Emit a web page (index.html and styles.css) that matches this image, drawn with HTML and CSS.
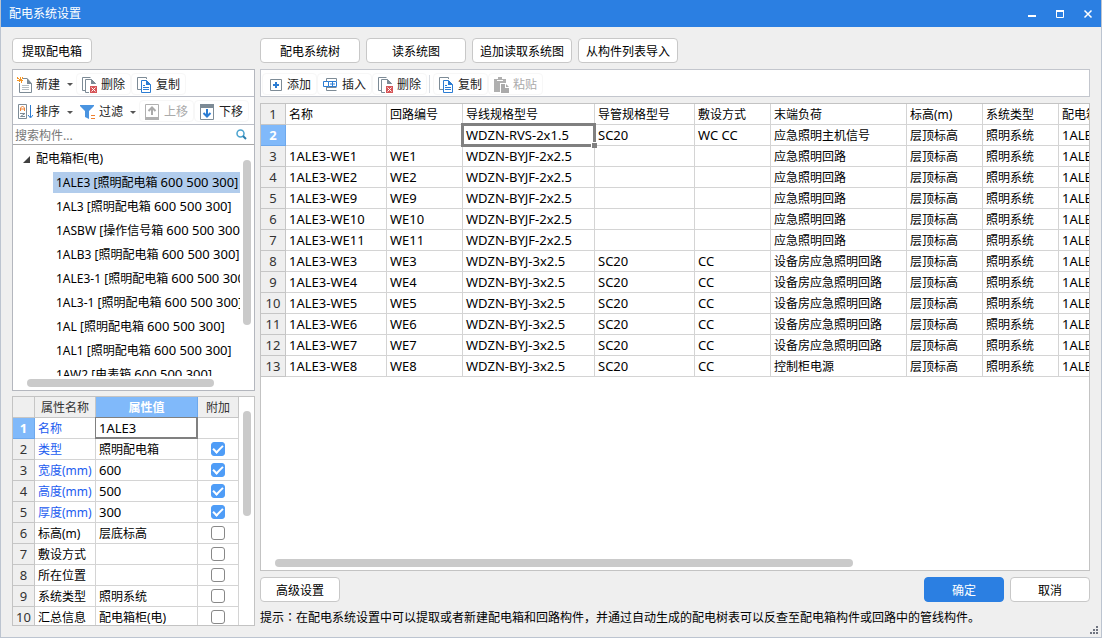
FILE: index.html
```html
<!DOCTYPE html>
<html lang="zh-CN">
<head>
<meta charset="utf-8">
<title>配电系统设置</title>
<link rel="stylesheet" href="styles.css">
</head>
<body>
<svg class="defs" aria-hidden="true">
  <symbol id="i-delete" viewBox="0 0 16 16"><path d="M3 13.500H.5V.5h8" fill="none" stroke="#7d8b96"/><path d="M7 15.500H3.500V2.500h6l4 4V7" fill="none" stroke="#7d8b96"/><path d="M9 2v5h5z" fill="#7d8b96"/><path d="M8 9h7v7H8z" fill="#d65558"/><path d="M9.500 10.500l4 4m0-4l-4 4" stroke="#fff"/></symbol>
  <symbol id="i-copy" viewBox="0 0 16 16"><path d="M4 12.500H.5V.5h9V2" fill="none" stroke="#7d8b96"/><path d="M4.500 3.500h5l4 4v8h-9z" fill="#fff" stroke="#2b7cd3"/><path d="M9 3v5h5z" fill="#2b7cd3"/><path d="M6 8.500h2M6 10.500h6M6 12.500h6" stroke="#2b7cd3"/></symbol>
  <symbol id="i-new" viewBox="0 0 16 16"><path d="M6 1.500h4l4.500 5v9H2.500V6" fill="#fff" stroke="#7d8b96"/><path d="M10 1v6h5z" fill="#7d8b96"/><path d="M5 8.500h7M5 10.500h7M5 12.500h7" stroke="#b5bec4"/><path d="M0 0h1v1h1v1h1V0h1v2h1V0h1v2H5v1h1v1H5v2H4V4H3v1H2V4H0V3h2V2H0z" fill="#f39423"/></symbol>
  <symbol id="i-sort" viewBox="0 0 16 16"><path d="M1.500.500h8v14h-8z" fill="#fff" stroke="#7d8b96"/><path d="M3.500 7V4l2-2 2 2v3m-4-2h4" fill="none" stroke="#ee8131"/><path d="M3 9.500h5L3.500 12.500H8" fill="none" stroke="#7d8b96"/><path d="M13.500 1v12m-2.500-2l2.500 3L16 11" fill="none" stroke="#2b7cd3"/></symbol>
  <symbol id="i-filter" viewBox="0 0 16 16"><path d="M0 1h14v1L9 7v8l-4-2V7L0 2z" fill="#4a94e0"/><path d="M11 11.500h4M11 14.500h4" stroke="#ee8131"/></symbol>
  <symbol id="i-up" viewBox="0 0 16 16"><path d="M.5.500h13v15H.5z" fill="#fff" stroke="#b0b0b0"/><path d="M0 13h14v3H0z" fill="#b0b0b0"/><path d="M7 11V4M3.500 7L7 3.500 10.500 7" fill="none" stroke="#aaa" stroke-width="2"/></symbol>
  <symbol id="i-down" viewBox="0 0 16 16"><path d="M.5.500h13v15H.5z" fill="#fff" stroke="#7d8b96"/><path d="M0 0h14v4H0z" fill="#7d8b96"/><path d="M7 5v7M3.500 9L7 12.500 10.500 9" fill="none" stroke="#2b7cd3" stroke-width="2"/></symbol>
  <symbol id="i-add" viewBox="0 0 16 16"><path d="M2.500 2.500h11v11h-11z" fill="#fff" stroke="#7d8b96"/><path d="M5 8h6M8 5v6" stroke="#2b7cd3" stroke-width="2"/></symbol>
  <symbol id="i-insert" viewBox="0 0 16 16"><path d="M3.500 4V1.500h10V4M3.500 10v3.500h10M3.500 10.500h10" fill="none" stroke="#7d8b96"/><path d="M5.500 4.500h-5v5h5M5.500 4.500h8v5h-8zM7 7h5M9.500 5v4" fill="none" stroke="#2b7cd3"/></symbol>
  <symbol id="i-paste" viewBox="0 0 16 16"><path d="M0 2h4V0h4v2h4v4H6v9H0z" fill="#b0b0b0"/><path d="M3 3.500h6" stroke="#fff"/><path d="M7 7h4v4h4v5H7z" fill="#aaa"/><path d="M12 7l3 3h-3z" fill="#aaa"/></symbol>
</svg>
<div class="window">
  <header class="titlebar">
    <h1>配电系统设置</h1>
    <div class="controls">
      <button type="button" aria-label="最小化"><svg viewBox="0 0 10 10"><path d="M1 7h8" stroke="#fff" stroke-width="2"/></svg></button>
      <button type="button" aria-label="最大化"><svg viewBox="0 0 10 10"><path d="M1.500 1v7.500h7V1" fill="none" stroke="#fff"/><path d="M1 2h8" stroke="#fff" stroke-width="2"/></svg></button>
      <button type="button" aria-label="关闭"><svg viewBox="0 0 10 10"><path d="M1.500 1.500l7 7m0-7l-7 7" stroke="#fff" stroke-width="1.500"/></svg></button>
    </div>
  </header>
  <div class="content">
    <aside class="side">
      <div class="actions"><button type="button" class="btn small">提取配电箱</button></div>
      <section class="browser">
        <div class="tools">
          <button type="button" class="tool menu"><svg><use href="#i-new"/></svg>新建<i class="caret"></i></button>
          <button type="button" class="tool"><svg><use href="#i-delete"/></svg>删除</button>
          <button type="button" class="tool"><svg><use href="#i-copy"/></svg>复制</button>
        </div>
        <div class="tools second">
          <button type="button" class="tool menu"><svg><use href="#i-sort"/></svg>排序<i class="caret"></i></button>
          <button type="button" class="tool menu"><svg><use href="#i-filter"/></svg>过滤<i class="caret"></i></button>
          <button type="button" class="tool" disabled><svg><use href="#i-up"/></svg>上移</button>
          <button type="button" class="tool"><svg><use href="#i-down"/></svg>下移</button>
        </div>
        <label class="search"><input type="text" placeholder="搜索构件..." aria-label="搜索构件"><svg viewBox="0 0 11 11"><circle cx="4.500" cy="4.500" r="3.500" fill="none" stroke="#4ba3cf" stroke-width="1.500"/><path d="M7 7l3 3" stroke="#2b7fae" stroke-width="2"/></svg></label>
        <div class="tree">
          <div class="tree-view">
            <div class="root"><svg viewBox="0 0 7 7"><path d="M7 0v7H0z" fill="#404040"/></svg>配电箱柜(电)</div>
            <ul>
              <li class="selected">1ALE3 [照明配电箱 <span class="latin">600 500 300</span>]</li>
              <li>1AL3 [照明配电箱 <span class="latin">600 500 300</span>]</li>
              <li>1ASBW [操作信号箱 <span class="latin">600 500 300</span>]</li>
              <li>1ALB3 [照明配电箱 <span class="latin">600 500 300</span>]</li>
              <li>1ALE3-1 [照明配电箱 <span class="latin">600 500 300</span>]</li>
              <li>1AL3-1 [照明配电箱 <span class="latin">600 500 300</span>]</li>
              <li>1AL [照明配电箱 <span class="latin">600 500 300</span>]</li>
              <li>1AL1 [照明配电箱 <span class="latin">600 500 300</span>]</li>
              <li>1AW2 [电表箱 <span class="latin">600 500 300</span>]</li>
            </ul>
          </div>
          <div class="vbar"><div class="thumb"></div></div>
          <div class="hbar"><div class="thumb"></div></div>
        </div>
      </section>
      <section class="props">
        <table class="sheet">
          <colgroup><col class="p-no"><col class="p-name"><col class="p-value"><col class="p-extra"></colgroup>
          <thead><tr><th></th><th>属性名称</th><th class="active">属性值</th><th>附加</th></tr></thead>
          <tbody>
            <tr><th class="active">1</th><td class="key">名称</td><td class="latin editing">1ALE3</td><td></td></tr>
            <tr><th>2</th><td class="key">类型</td><td>照明配电箱</td><td class="check"><input type="checkbox" aria-label="类型附加" checked></td></tr>
            <tr><th>3</th><td class="key">宽度(mm)</td><td class="latin">600</td><td class="check"><input type="checkbox" aria-label="宽度附加" checked></td></tr>
            <tr><th>4</th><td class="key">高度(mm)</td><td class="latin">500</td><td class="check"><input type="checkbox" aria-label="高度附加" checked></td></tr>
            <tr><th>5</th><td class="key">厚度(mm)</td><td class="latin">300</td><td class="check"><input type="checkbox" aria-label="厚度附加" checked></td></tr>
            <tr><th>6</th><td>标高(m)</td><td>层底标高</td><td class="check"><input type="checkbox" aria-label="标高附加"></td></tr>
            <tr><th>7</th><td>敷设方式</td><td></td><td class="check"><input type="checkbox" aria-label="敷设方式附加"></td></tr>
            <tr><th>8</th><td>所在位置</td><td></td><td class="check"><input type="checkbox" aria-label="所在位置附加"></td></tr>
            <tr><th>9</th><td>系统类型</td><td>照明系统</td><td class="check"><input type="checkbox" aria-label="系统类型附加"></td></tr>
            <tr><th>10</th><td>汇总信息</td><td>配电箱柜(电)</td><td class="check"><input type="checkbox" aria-label="汇总信息附加"></td></tr>
          </tbody>
        </table>
        <div class="vbar"><div class="thumb"></div></div>
      </section>
    </aside>
    <main class="main">
      <div class="actions">
        <button type="button" class="btn">配电系统树</button>
        <button type="button" class="btn">读系统图</button>
        <button type="button" class="btn">追加读取系统图</button>
        <button type="button" class="btn">从构件列表导入</button>
      </div>
      <div class="tools framed">
        <button type="button" class="tool"><svg><use href="#i-add"/></svg>添加</button>
        <button type="button" class="tool"><svg><use href="#i-insert"/></svg>插入</button>
        <button type="button" class="tool"><svg><use href="#i-delete"/></svg>删除</button>
        <span class="divider"></span>
        <button type="button" class="tool"><svg><use href="#i-copy"/></svg>复制</button>
        <button type="button" class="tool" disabled><svg><use href="#i-paste"/></svg>粘贴</button>
      </div>
      <section class="circuits">
        <div class="circuit-view">
        <table class="sheet">
          <colgroup><col class="c-no"><col class="c-name"><col class="c-std"><col class="c-wire"><col class="c-pipe"><col class="c-std"><col class="c-load"><col class="c-std"><col class="c-std"><col class="c-box"></colgroup>
          <tbody>
            <tr><th>1</th><td>名称</td><td>回路编号</td><td>导线规格型号</td><td>导管规格型号</td><td>敷设方式</td><td>末端负荷</td><td>标高(m)</td><td>系统类型</td><td>配电箱信息</td></tr>
            <tr><th class="active">2</th><td></td><td></td><td class="latin current">WDZN-RVS-2x1.5</td><td class="latin">SC20</td><td class="latin">WC CC</td><td>应急照明主机信号</td><td>层顶标高</td><td>照明系统</td><td class="latin">1ALE3</td></tr>
            <tr><th>3</th><td class="latin">1ALE3-WE1</td><td class="latin">WE1</td><td class="latin">WDZN-BYJF-2x2.5</td><td></td><td></td><td>应急照明回路</td><td>层顶标高</td><td>照明系统</td><td class="latin">1ALE3</td></tr>
            <tr><th>4</th><td class="latin">1ALE3-WE2</td><td class="latin">WE2</td><td class="latin">WDZN-BYJF-2x2.5</td><td></td><td></td><td>应急照明回路</td><td>层顶标高</td><td>照明系统</td><td class="latin">1ALE3</td></tr>
            <tr><th>5</th><td class="latin">1ALE3-WE9</td><td class="latin">WE9</td><td class="latin">WDZN-BYJF-2x2.5</td><td></td><td></td><td>应急照明回路</td><td>层顶标高</td><td>照明系统</td><td class="latin">1ALE3</td></tr>
            <tr><th>6</th><td class="latin">1ALE3-WE10</td><td class="latin">WE10</td><td class="latin">WDZN-BYJF-2x2.5</td><td></td><td></td><td>应急照明回路</td><td>层顶标高</td><td>照明系统</td><td class="latin">1ALE3</td></tr>
            <tr><th>7</th><td class="latin">1ALE3-WE11</td><td class="latin">WE11</td><td class="latin">WDZN-BYJF-2x2.5</td><td></td><td></td><td>应急照明回路</td><td>层顶标高</td><td>照明系统</td><td class="latin">1ALE3</td></tr>
            <tr><th>8</th><td class="latin">1ALE3-WE3</td><td class="latin">WE3</td><td class="latin">WDZN-BYJ-3x2.5</td><td class="latin">SC20</td><td class="latin">CC</td><td>设备房应急照明回路</td><td>层顶标高</td><td>照明系统</td><td class="latin">1ALE3</td></tr>
            <tr><th>9</th><td class="latin">1ALE3-WE4</td><td class="latin">WE4</td><td class="latin">WDZN-BYJ-3x2.5</td><td class="latin">SC20</td><td class="latin">CC</td><td>设备房应急照明回路</td><td>层顶标高</td><td>照明系统</td><td class="latin">1ALE3</td></tr>
            <tr><th>10</th><td class="latin">1ALE3-WE5</td><td class="latin">WE5</td><td class="latin">WDZN-BYJ-3x2.5</td><td class="latin">SC20</td><td class="latin">CC</td><td>设备房应急照明回路</td><td>层顶标高</td><td>照明系统</td><td class="latin">1ALE3</td></tr>
            <tr><th>11</th><td class="latin">1ALE3-WE6</td><td class="latin">WE6</td><td class="latin">WDZN-BYJ-3x2.5</td><td class="latin">SC20</td><td class="latin">CC</td><td>设备房应急照明回路</td><td>层顶标高</td><td>照明系统</td><td class="latin">1ALE3</td></tr>
            <tr><th>12</th><td class="latin">1ALE3-WE7</td><td class="latin">WE7</td><td class="latin">WDZN-BYJ-3x2.5</td><td class="latin">SC20</td><td class="latin">CC</td><td>设备房应急照明回路</td><td>层顶标高</td><td>照明系统</td><td class="latin">1ALE3</td></tr>
            <tr><th>13</th><td class="latin">1ALE3-WE8</td><td class="latin">WE8</td><td class="latin">WDZN-BYJ-3x2.5</td><td class="latin">SC20</td><td class="latin">CC</td><td>控制柜电源</td><td>层顶标高</td><td>照明系统</td><td class="latin">1ALE3</td></tr>
          </tbody>
        </table>
        </div>
        <div class="hbar"><div class="thumb"></div></div>
      </section>
      <footer>
        <div class="dialog-buttons">
          <button type="button" class="btn small">高级设置</button>
          <button type="button" class="btn small primary">确定</button>
          <button type="button" class="btn small">取消</button>
        </div>
        <p>提示<span class="colon" lang="zh-TW">：</span>在配电系统设置中可以提取或者新建配电箱和回路构件，并通过自动生成的配电树表可以反查至配电箱构件或回路中的管线构件。</p>
      </footer>
    </main>
  </div>
  <svg class="grip" viewBox="0 0 8 8" aria-hidden="true"><path d="M6 0h2v2H6zM3 3h2v2H3zM6 3h2v2H6zM0 6h2v2H0zM3 6h2v2H3zM6 6h2v2H6z" fill="#6f7480"/></svg>
</div>
</body>
</html>
```

FILE: styles.css
```css
* { box-sizing: border-box; }
body { margin: 0; }
body, button, input, table {
  font: 12px/18px "Noto Sans", "Noto Sans CJK SC", sans-serif;
  color: #000;
}
.defs { position: absolute; width: 0; height: 0; }
.latin { font-size: 13px; }

.window {
  position: relative;
  display: flex;
  flex-direction: column;
  height: 100vh;
  overflow: hidden;
  background: #efefef;
  border: solid #bcc4d0;
  border-width: 0 1px 1px;
}
.titlebar {
  flex: none;
  display: flex;
  justify-content: space-between;
  align-items: center;
  height: 27px;
  margin: 0 -1px;
  padding: 0 8px 0 9px;
  background: #2b7fe2;
}
.titlebar h1 { margin: 0; padding-top: 1px; font-size: 12px; font-weight: 400; color: #fff; }
.controls { display: flex; gap: 16px; }
.controls button { display: flex; padding: 1px; border: 0; background: none; }
.controls svg { width: 10px; height: 10px; }

.content {
  flex: 1;
  min-height: 0;
  display: grid;
  grid-template-columns: 243px minmax(0, 1fr);
  gap: 5px;
  padding: 11px;
}
.side, .main { display: flex; flex-direction: column; gap: 6px; min-height: 0; }
.actions { flex: none; display: flex; gap: 6px; }
.btn {
  width: 100px;
  height: 25px;
  padding: 2px 0 0;
  border: 1px solid #c8c8c8;
  border-radius: 4px;
  background: #fff;
  white-space: nowrap;
}
.btn.small { width: 80px; }
.btn.primary { margin-left: auto; border-color: #2b7fe2; background: #2b7fe2; color: #fff; }

.tools { flex: none; display: flex; align-items: center; height: 27px; padding-top: 1px; border-bottom: 1px solid #bcbfc8; background: #fff; }
.tools.second { height: 28px; }
.tools.framed { height: 28px; padding-left: 1px; border: 1px solid #c3c6cd; }
.tool {
  display: flex;
  align-items: center;
  gap: 3px;
  height: 22px;
  padding: 2px 5px 0;
  border: 1px solid #f7f7f7;
  border-radius: 4px;
  background: #fff;
  color: #222;
  white-space: nowrap;
}
.tool:disabled { color: #aaa; }
.tool svg { width: 16px; height: 16px; }
.tool.menu { padding: 2px 2px 0 3px; border-color: transparent; }
.caret { margin-left: 4px; border: 3px solid transparent; border-top-color: #555; border-bottom: 0; }
.divider { width: 1px; height: 18px; margin: 0 3px 0 2px; background: #d8dce2; }

.browser { flex: 1; min-height: 0; display: flex; flex-direction: column; margin-bottom: -1px; border: 1px solid #b4b7be; background: #fff; }
.search { flex: none; display: flex; align-items: center; height: 20px; padding: 0 7px 0 2px; border-bottom: 1px solid #a8a8a8; }
.search input { flex: 1; min-width: 0; height: 19px; padding: 2px 0 0; border: 0; outline: 0; background: none; }
.search input::placeholder { color: #777; opacity: 1; }
.search svg { width: 11px; height: 11px; }
.tree { flex: 1; min-height: 0; display: grid; grid-template: minmax(0, 1fr) 14px / minmax(0, 1fr) 14px; padding-top: 1px; }
.tree-view { overflow: hidden; white-space: nowrap; }
.root { display: flex; align-items: center; gap: 6px; height: 24px; padding: 2px 0 0 10px; }
.root svg { width: 7px; height: 7px; }
.tree ul { margin: 0; padding: 0 0 0 40px; list-style: none; }
.tree li { height: 21px; margin: 2px 0 3px; padding-left: 3px; line-height: 21px; }
.tree .selected { background: #b1ccec; }
.thumb { border-radius: 4px; background: #cacaca; }
.vbar { width: 14px; padding: 14px 3px 0; }
.vbar .thumb { width: 8px; }
.hbar { height: 14px; padding: 3px 0 3px 14px; }
.hbar .thumb { height: 8px; }
.tree .vbar .thumb { height: 165px; }
.tree .hbar .thumb { width: 88%; }

.props { flex: none; display: flex; height: 230px; overflow: hidden; border: 1px solid #c3c3c3; background: #fff; }
.props .vbar { padding-left: 4px; }
.props .vbar .thumb { height: 105px; }

.sheet { table-layout: fixed; width: 0; border-spacing: 0; flex: none; }
.sheet th, .sheet td {
  height: 21px;
  padding: 2px 0 0 3px;
  border: solid #d4d4d4;
  border-width: 0 1px 1px 0;
  line-height: 18px;
  text-align: left;
  white-space: nowrap;
}
.sheet th { padding: 2px 0 0; border-color: #c6c6c6; background: #efefef; color: #333; font-weight: 400; text-align: center; }
.sheet tbody th { padding: 0; font-size: 13px; line-height: 20px; }
.sheet td.latin { padding-top: 0; line-height: 20px; }
.sheet th.active { border-color: #6da8ec; background: #80b9fa; color: #fff; font-weight: 700; }
.sheet .key { color: #1c5cf0; }
.sheet td.check { padding: 0; text-align: center; }
.p-no { width: 22px; }
.p-name { width: 61px; }
.p-value { width: 102px; }
.p-extra { width: 41px; }
.c-no { width: 25px; }
.c-name { width: 101px; }
.c-std { width: 76px; }
.c-wire { width: 132px; }
.c-pipe { width: 100px; }
.c-load { width: 136px; }
.c-box { width: 100px; }

.editing, .current { position: relative; }
.editing::after { content: ""; position: absolute; inset: -1px; border: 1px solid #808080; border-right-width: 2px; border-bottom-width: 2px; }
.current::before { content: ""; position: absolute; inset: -2px; border: 3px solid #808080; }
.current::after { content: ""; position: absolute; right: -3px; bottom: -3px; width: 5px; height: 5px; border: solid #fff; border-width: 1px 0 0 1px; background: #808080; }

.check input {
  appearance: none;
  display: block;
  width: 14px;
  height: 14px;
  margin: 0 auto;
  border: 1px solid #888;
  border-radius: 3px;
  background: #fff;
}
.check input:checked { display: grid; place-items: center; border-color: #4f9df7; background: #4f9df7; }
.check input:checked::after { content: ""; width: 8px; height: 4px; margin-bottom: 2px; border: solid #fff; border-width: 0 0 2px 2px; transform: rotate(-45deg); }

.circuits { flex: 1; min-height: 0; display: flex; flex-direction: column; border: 1px solid #c3c3c3; background: #fff; }
.circuit-view { flex: 1; min-height: 0; overflow: hidden; }
.circuits .hbar .thumb { width: 71%; }
footer { flex: none; }
.dialog-buttons { display: flex; gap: 6px; }
footer p { margin: 7px 0 -1px; white-space: nowrap; }
.colon { font-family: "Noto Sans CJK TC", sans-serif; line-height: 1; }
.grip { position: absolute; right: 3px; bottom: 3px; width: 8px; height: 8px; }
```
